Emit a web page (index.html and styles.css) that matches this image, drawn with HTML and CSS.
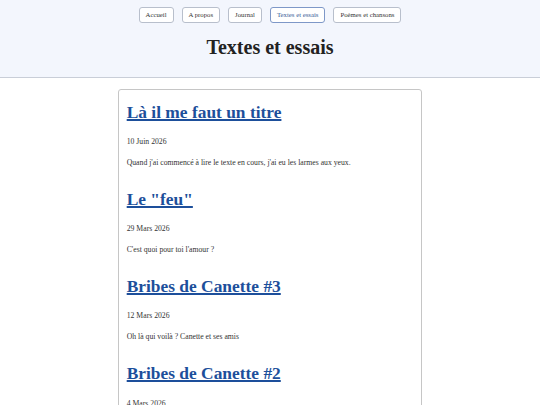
FILE: index.html
```html
<!DOCTYPE html>
<html lang="fr">
<head>
<meta charset="utf-8">
<title>Textes et essais</title>
<link rel="stylesheet" href="styles.css">
</head>
<body>
<header class="site-header">
  <nav class="nav">
    <a class="nav-btn" href="#">Accueil</a>
    <a class="nav-btn" href="#">A propos</a>
    <a class="nav-btn" href="#">Journal</a>
    <a class="nav-btn active" href="#">Textes et essais</a>
    <a class="nav-btn" href="#">Poèmes et chansons</a>
  </nav>
  <h1 class="page-title">Textes et essais</h1>
</header>
<main class="content">
  <section class="card">
    <article class="post">
      <h2 class="post-title"><a href="#">Là il me faut un titre</a></h2>
      <p class="post-date">10 Juin 2026</p>
      <p class="post-excerpt">Quand j'ai commencé à lire le texte en cours, j'ai eu les larmes aux yeux.</p>
    </article>
    <article class="post">
      <h2 class="post-title"><a href="#">Le "feu"</a></h2>
      <p class="post-date">29 Mars 2026</p>
      <p class="post-excerpt">C'est quoi pour toi l'amour ?</p>
    </article>
    <article class="post">
      <h2 class="post-title"><a href="#">Bribes de Canette #3</a></h2>
      <p class="post-date">12 Mars 2026</p>
      <p class="post-excerpt">Oh là qui voilà ? Canette et ses amis</p>
    </article>
    <article class="post">
      <h2 class="post-title"><a href="#">Bribes de Canette #2</a></h2>
      <p class="post-date">4 Mars 2026</p>
      <p class="post-excerpt">Canette et ses amis, encore un peu</p>
    </article>
  </section>
</main>
</body>
</html>
```

FILE: styles.css
```css
html, body {
  margin: 0;
  padding: 0;
}

body {
  font-family: "Liberation Serif", "Times New Roman", serif;
  font-size: 7.72px;
  line-height: 1.7;
  color: #333;
  background: #ffffff;
}

.site-header {
  background: #f3f6fd;
  border-bottom: 1px solid #c9ced8;
  padding: 7px 0 18px;
}

.nav {
  display: flex;
  justify-content: center;
  gap: 8px;
}

.nav-btn {
  display: block;
  font-size: 6.75px;
  line-height: 8px;
  padding: 3px 6px;
  border: 1px solid #b8bfcc;
  border-radius: 3px;
  background: #ffffff;
  color: #333;
  text-decoration: none;
}

.nav-btn.active {
  border-color: #7e98c8;
  color: #3b5c98;
}

.page-title {
  margin: 12px 0 0;
  font-size: 20px;
  line-height: 24px;
  text-align: center;
  color: #222;
}

.content {
  padding-top: 11px;
}

.card {
  width: 304px;
  box-sizing: border-box;
  margin: 0 auto;
  padding: 7.7px;
  border: 1px solid #c6c6c6;
  border-radius: 3px;
}

.post-title {
  margin: 0;
  font-size: 17.4px;
  line-height: 1.7;
}

.post-title a {
  color: #1d4f9b;
  text-decoration: underline;
  text-decoration-thickness: 1.5px;
}

.post p {
  margin: 7.72px 0;
}

.post .post-excerpt {
  margin-bottom: 16px;
}
```
